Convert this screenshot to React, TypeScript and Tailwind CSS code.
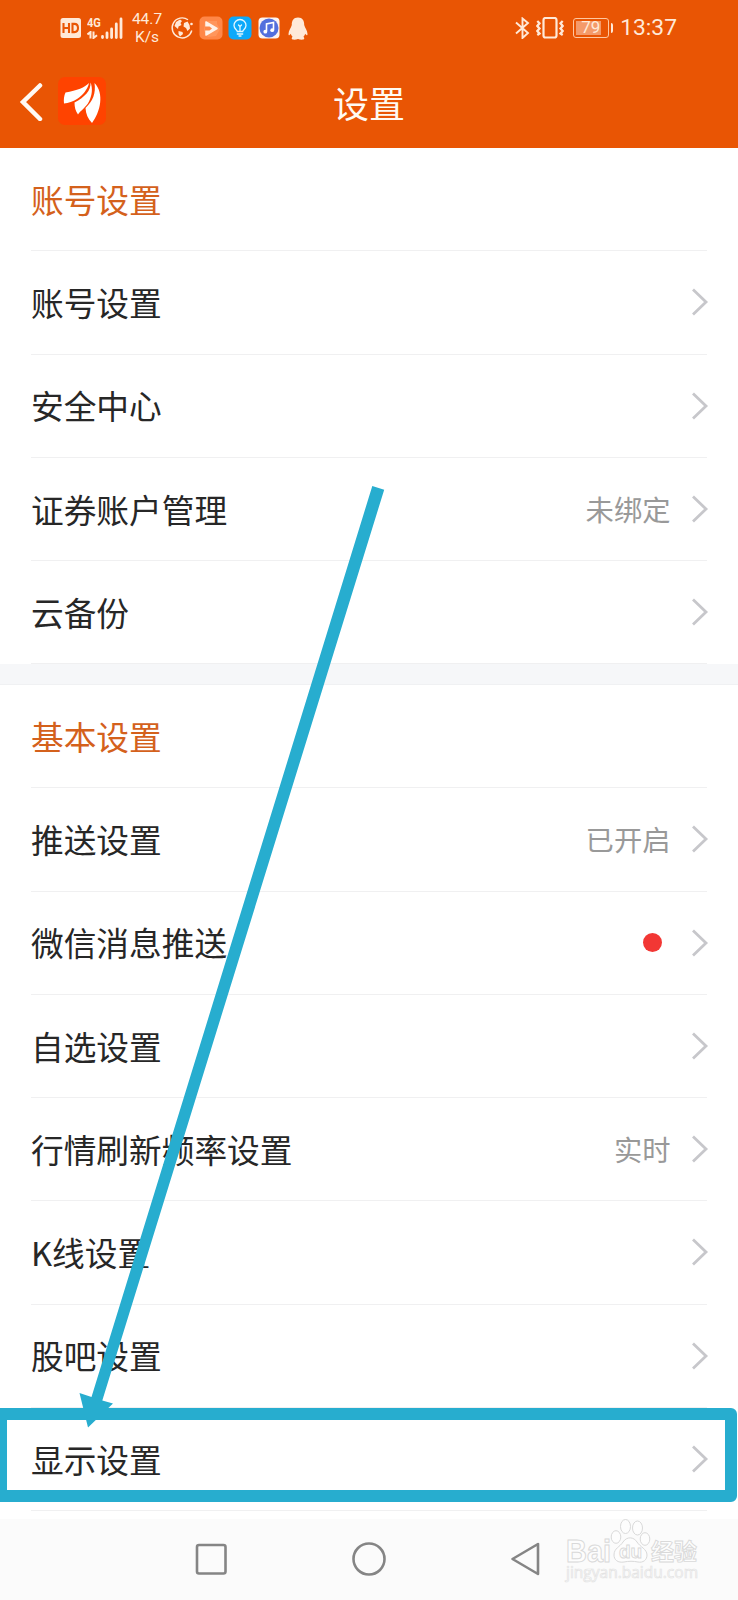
type RowItem = {
  label: string;
  value?: string;
  dot?: boolean;
};

const accountRows: RowItem[] = [
  { label: '账号设置' },
  { label: '安全中心' },
  { label: '证券账户管理', value: '未绑定' },
  { label: '云备份' },
];

const basicRows: RowItem[] = [
  { label: '推送设置', value: '已开启' },
  { label: '微信消息推送', dot: true },
  { label: '自选设置' },
  { label: '行情刷新频率设置', value: '实时' },
  { label: 'K线设置' },
  { label: '股吧设置' },
  { label: '显示设置' },
];

const StatusBar = () => (
  <div className="flex h-[56px] items-center justify-between pl-[60px] pr-[61px] text-[#ffe9d8]">
    <div className="flex items-center">
      <svg width="22" height="20" viewBox="0 0 22 20">
        <rect x="0.5" y="0" width="20.5" height="20" rx="2.5" fill="currentColor" />
        <path
          d="M3.500 5v10M9 5v10M3.500 10H9M12.500 5.900v8.200h1.800c2.500 0 3.700-1.600 3.700-4.100s-1.200-4.100-3.700-4.100z"
          fill="none"
          stroke="#e95504"
          strokeWidth="2.100"
        />
      </svg>
      <div className="ml-[5px] flex h-[22px] w-[36px] items-end">
        <div className="flex h-full w-[14px] flex-col justify-between">
          <span className="origin-left scale-x-85 font-['Roboto',sans-serif] text-[13px] font-bold leading-[11px]">
            4G
          </span>
          <svg width="12" height="8" viewBox="0 0 12 8">
            <path
              d="M0.500 3.500L3.500 1v6.500M6.500 0.500v6.500L10 4.300"
              fill="none"
              stroke="currentColor"
              strokeWidth="2"
            />
          </svg>
        </div>
        <svg width="22" height="22" viewBox="0 0 22 22">
          <path
            d="M1.500 19.500v1M6 16v4.500M10.600 12v8.500M15.300 7v13.500M20 2v18.500"
            stroke="currentColor"
            strokeWidth="2.800"
            strokeLinecap="round"
          />
        </svg>
      </div>
      <div className="ml-[7px] flex w-[34px] flex-col items-center whitespace-nowrap font-['Roboto',sans-serif] text-[15.500px] leading-[18px]">
        <span>44.7</span>
        <span>K/s</span>
      </div>
      <svg width="24" height="24" viewBox="0 0 24 24" className="ml-[6px]">
        <path
          d="M18 3.800A10 10 0 1 0 21.800 14.500"
          fill="none"
          stroke="currentColor"
          strokeWidth="1.400"
        />
        <path
          d="M6 6l4-2.500 2 1.500-1.500 2 1 2-3 1.500L8 13 4.500 10zM14 7l3.500-1.500 2 3.500.5 3.500-2.500 2.500-1.500-3-2.500-1.500zM8.500 15l4 1 .5 2-3 2.500-1.500-2.500z"
          fill="currentColor"
        />
        <circle cx="21.500" cy="8" r="1.300" fill="currentColor" />
      </svg>
      <svg width="24" height="24" viewBox="0 0 24 24" className="ml-[5px]">
        <rect x="0.500" y="0.500" width="23" height="23" rx="5" fill="#ff8748" />
        <path d="M6 5h12v3l3 5-4 7-8 1-4-6z" fill="#ff965c" />
        <path
          d="M7 6l11 6.500L7 19z"
          fill="#fff2e8"
          stroke="#fff2e8"
          strokeWidth="1.500"
          strokeLinejoin="round"
        />
        <path d="M6 10.500h4.500l2.500 2-2.500 2H6z" fill="#ff8748" />
      </svg>
      <svg width="24" height="24" viewBox="0 0 24 24" className="ml-[5px]">
        <rect x="0.500" y="0.500" width="23" height="23" rx="5" fill="#0ca9fa" />
        <path
          d="M9.300 15.500c0-1.500-3.300-2.500-3.300-6a6 6 0 0 1 12 0c0 3.500-3.300 4.500-3.300 6zM9.300 18h5.400M11 20h2M12 15v-4.500M10.500 9l1.500 1.500L13.500 9"
          fill="none"
          stroke="#e2f7ff"
          strokeWidth="1.300"
          strokeLinecap="round"
        />
      </svg>
      <svg width="22" height="22" viewBox="0 0 22 22" className="ml-[6px]">
        <rect x="0.500" y="0.500" width="21" height="21" rx="4" fill="#fdf3f0" />
        <circle cx="11" cy="11" r="9.500" fill="#536fdd" />
        <path d="M8.500 14.500V7l7-1.500V13" fill="none" stroke="#fff" strokeWidth="1.600" />
        <circle cx="7.300" cy="14.700" r="1.900" fill="#fff" />
        <circle cx="14.200" cy="13.200" r="1.900" fill="#fff" />
      </svg>
      <svg width="20" height="23" viewBox="0 0 20 23" className="ml-[8px]">
        <path
          d="M10 0.500C5.500 0.500 3.600 4 3.800 8 3 11 .6 13.500.5 17c0 1.800.8 1.500 2.300-.3.500 1.500 1 2.300 1.800 3-1 .8-1.400 2.500 0 2.800 1.800.4 3.800 0 5.400-.6 1.600.6 3.600 1 5.400.6 1.400-.3 1-2 0-2.800.8-.7 1.300-1.500 1.800-3 1.500 1.800 2.300 2.100 2.300.3-.1-3.500-2.500-6-3.300-9C16.400 4 14.500.5 10 .5z"
          fill="currentColor"
        />
      </svg>
    </div>
    <div className="flex items-center">
      <svg width="15" height="22" viewBox="0 0 15 22">
        <path
          d="M1 5.500l12 10.500L7.500 21V1.500L13 6 1 16.500"
          fill="none"
          stroke="currentColor"
          strokeWidth="1.900"
        />
      </svg>
      <svg width="28" height="22" viewBox="0 0 28 22" className="ml-[6px]">
        <rect
          x="7.500"
          y="1"
          width="13"
          height="19.500"
          rx="2"
          fill="none"
          stroke="currentColor"
          strokeWidth="2.200"
        />
        <path
          d="M1.300 4l2.200 2.300L1.300 9l2.200 2.500-2.200 2.500 2.200 2.500L1.300 18M26.700 4l-2.200 2.300L26.700 9l-2.200 2.500 2.200 2.500-2.200 2.500 2.200 1.500"
          fill="none"
          stroke="currentColor"
          strokeWidth="2.300"
        />
      </svg>
      <div className="ml-[9px] flex h-[19.500px] w-[35.500px] rounded-[3px] border-[1.500px] border-[#ffc7a0] p-[1.500px]">
        <div className="flex h-full w-[25px] items-center justify-center whitespace-nowrap bg-[#f49a6a] pl-[5px] font-['Roboto',sans-serif] text-[17px] leading-none">
          79
        </div>
      </div>
      <div className="ml-[2px] h-[10px] w-[2.500px] rounded-r-sm bg-[#ffe9d8]" />
      <span className="ml-[7px] font-['Roboto',sans-serif] text-[22.800px] leading-none">13:37</span>
    </div>
  </div>
);

const TitleBar = () => (
  <div className="relative flex h-[89px] items-center pl-[19px]">
    <svg width="24" height="40" viewBox="0 0 24 40">
      <path
        d="M21 4.500L4 21l17 17"
        fill="none"
        stroke="#fffaf4"
        strokeWidth="4.500"
        strokeLinecap="round"
      />
    </svg>
    <svg width="50" height="50" viewBox="0 0 50 50" className="ml-[14px]">
      <rect x="1" y="1" width="48" height="48" rx="7" fill="#ff4300" />
      <path
        d="M32 7C28 11.500 20 14.500 8.500 16.500 7 19.500 6.500 23.500 7 27.500c4.500-.8 9-1.500 13-4.500C26 19 30.500 13.500 32 7z"
        fill="#fff"
      />
      <path
        d="M33.500 6.500c.5 8-5.500 14.500-16 20 0 4.500 1 8.500 3.500 12 2-3.500 8-7 11-13 3-6 4-13 1.500-19z"
        fill="#fff"
      />
      <path
        d="M37.500 7c1.500 10-1.500 18-9 25 .3 6 2.500 11 6.500 15 8.500-11 12.500-30 2.500-40z"
        fill="#fff"
      />
    </svg>
    <h1 className="pointer-events-none absolute inset-x-0 top-[25px] text-center text-[36px] leading-[42px] text-[#fffaf2]">
      设置
    </h1>
  </div>
);

const SectionTitle = ({ title }: { title: string }) => (
  <div className="flex h-[103.270px] flex-col px-[31px]">
    <div className="flex flex-1 items-center text-[32.700px] leading-none text-[#d4611c]">
      {title}
    </div>
    <div className="h-px shrink-0 bg-[#f0f0f1]" />
  </div>
);

const Row = ({ item }: { item: RowItem }) => (
  <div className="flex h-[103.270px] flex-col px-[31px]">
    <div className="-mr-[1.500px] flex flex-1 items-center text-[32.700px] leading-none text-[#272727]">
      <span className="flex-1">{item.label}</span>
      {item.value && <span className="text-[28.300px] text-[#999999]">{item.value}</span>}
      {item.dot && <span className="mr-[8.500px] size-[19px] rounded-full bg-[#f23734]" />}
      <svg width="18" height="28" viewBox="0 0 18 28" className="ml-[20px]">
        <path d="M2 1.500L15 14 2 26.500" fill="none" stroke="#c7c7cb" strokeWidth="2.800" />
      </svg>
    </div>
    <div className="h-px shrink-0 bg-[#f0f0f1]" />
  </div>
);

const NavBar = () => (
  <div className="flex flex-1 items-center bg-[#fbfbfb]">
    <svg width="32" height="32" viewBox="0 0 32 32" className="ml-[195px]">
      <rect
        x="2"
        y="2"
        width="28.500"
        height="28.500"
        rx="2"
        fill="none"
        stroke="#858585"
        strokeWidth="2.600"
      />
    </svg>
    <svg width="36" height="36" viewBox="0 0 36 36" className="ml-[124px]">
      <circle cx="18" cy="18" r="15.500" fill="none" stroke="#858585" strokeWidth="2.600" />
    </svg>
    <svg width="32" height="36" viewBox="0 0 32 36" className="ml-[123px]">
      <path
        d="M28 3v30L2.500 18z"
        fill="none"
        stroke="#858585"
        strokeWidth="2.600"
        strokeLinejoin="round"
      />
    </svg>
  </div>
);

const Watermark = () => (
  <svg
    width="142"
    height="72"
    viewBox="0 0 142 72"
    className="absolute bottom-[12px] right-[34px]"
    fill="#fdfdfd"
    stroke="#d9d9d9"
  >
    <text
      x="4"
      y="45.500"
      fontFamily="Liberation Sans, sans-serif"
      fontWeight="700"
      fontSize="31"
      textLength="45"
      lengthAdjust="spacingAndGlyphs"
    >
      Bai
    </text>
    <ellipse cx="54" cy="21" rx="4.800" ry="6.300" />
    <ellipse cx="63.500" cy="10.500" rx="5" ry="7" />
    <ellipse cx="75.500" cy="12" rx="5" ry="7" />
    <ellipse cx="83" cy="23" rx="4.800" ry="6.300" />
    <path d="M52 39c0-7 6-8 9-13 4-6 11-5 14 0s10 7 10 13c0 5-4 8-9 7-5-1-9-1-14 0-6 1-10-2-10-7z" />
    <text
      x="57"
      y="42"
      fontFamily="Liberation Sans, sans-serif"
      fontWeight="700"
      fontSize="19"
      textLength="23"
      strokeWidth="0.900"
    >
      du
    </text>
    <text
      x="89"
      y="43.500"
      fontFamily="Noto Sans CJK SC, sans-serif"
      fontWeight="700"
      fontSize="23"
      strokeWidth="0.900"
    >
      经验
    </text>
    <text
      x="4"
      y="62"
      fontFamily="Open Sans, sans-serif"
      fontSize="15.500"
      textLength="132"
      lengthAdjust="spacingAndGlyphs"
      stroke="#e3e3e3"
      strokeWidth="0.700"
    >
      jingyan.baidu.com
    </text>
  </svg>
);

// Hand-drawn style marker: arrow plus frame around the last row
const Annotation = () => (
  <>
    <svg
      width="738"
      height="1600"
      viewBox="0 0 738 1600"
      className="pointer-events-none absolute left-0 top-0"
    >
      <path
        d="M372.300 486L384.200 489.700 102.300 1400.500 113 1403.500 88 1427.500 79.500 1393 91.500 1397z"
        fill="#27adcf"
      />
    </svg>
    <div className="pointer-events-none absolute -left-[5.500px] top-[1407.700px] h-[94.500px] w-[742.300px] rounded-[6px] border-[12px] border-[#27adcf]" />
  </>
);

export default function App() {
  return (
    <div className="relative flex h-[1600px] w-[738px] flex-col overflow-hidden bg-white font-['Noto_Sans_CJK_SC',sans-serif]">
      <header className="h-[148px] shrink-0 bg-[#e95504]">
        <StatusBar />
        <TitleBar />
      </header>
      <main className="h-[1370.500px] shrink-0">
        <SectionTitle title="账号设置" />
        {accountRows.map((item) => (
          <Row key={item.label} item={item} />
        ))}
        <div className="h-[20.700px] border-b border-[#f0f1f3] bg-[#f6f7f9]" />
        <SectionTitle title="基本设置" />
        {basicRows.map((item) => (
          <Row key={item.label} item={item} />
        ))}
      </main>
      <NavBar />
      <Watermark />
      <Annotation />
    </div>
  );
}
